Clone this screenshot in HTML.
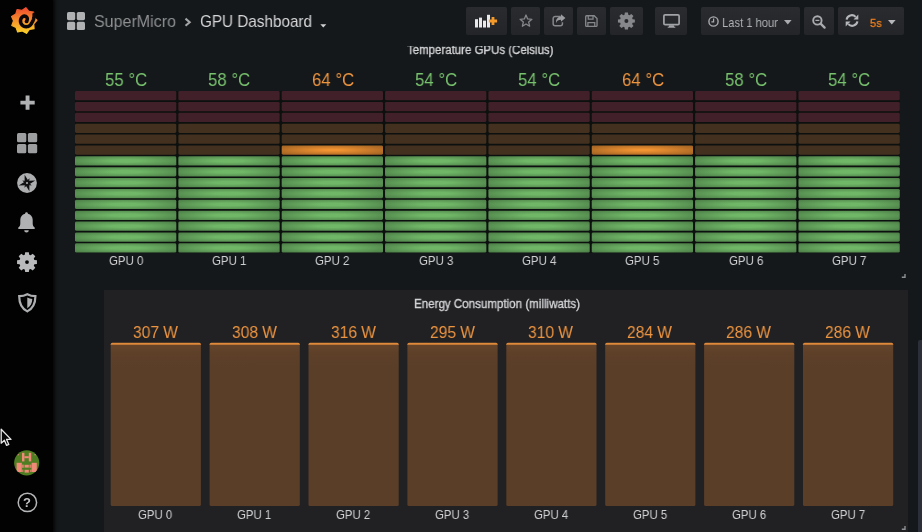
<!DOCTYPE html>
<html lang="en"><head><meta charset="utf-8"><title>GPU Dashboard - Grafana</title>
<style>
html,body{margin:0;padding:0}
body{width:922px;height:532px;overflow:hidden;position:relative;background:#15181a;
 font-family:"Liberation Sans",sans-serif;color:#d8d9da}
.abs{position:absolute}
.t{position:absolute;white-space:nowrap;transform-origin:0 50%;display:block;will-change:transform}
#side{left:0;top:0;width:52.5px;height:532px;background:#020203;box-shadow:1px 0 3px 1px rgba(2,2,3,.75);z-index:8}
#nav{left:53px;top:0;width:869px;height:46px;background:#15181a;z-index:5}
#p1{left:62px;top:0;width:845.8px;height:284.4px;overflow:hidden;background:#15181a}
#p2{left:103.5px;top:290px;width:804px;height:250px;background:#212124}
.btn{position:absolute;top:6.5px;height:28.5px;background:linear-gradient(#292b2e,#232528);border-radius:2px;z-index:6}
svg{position:absolute;overflow:visible}
</style></head><body>

<div class="abs" id="p1"></div>
<span class="t" style="left:407.00px;top:41.67px;font-size:12.5px;line-height:16px;color:#d3d4d6;transform:scaleX(0.9169);-webkit-text-stroke:.35px #d3d4d6;">Temperature GPUs (Celsius)</span>
<span class="t" style="left:104.80px;top:67.89px;font-size:18.5px;line-height:24px;color:#77c16e;transform:scaleX(0.9101);">55 °C</span>
<span class="t" style="left:108.55px;top:252.40px;font-size:13px;line-height:17px;color:#cfd0d2;transform:scaleX(0.8818);">GPU 0</span>
<span class="t" style="left:208.15px;top:67.89px;font-size:18.5px;line-height:24px;color:#77c16e;transform:scaleX(0.9101);">58 °C</span>
<span class="t" style="left:211.90px;top:252.40px;font-size:13px;line-height:17px;color:#cfd0d2;transform:scaleX(0.8818);">GPU 1</span>
<span class="t" style="left:311.50px;top:67.89px;font-size:18.5px;line-height:24px;color:#ee9540;transform:scaleX(0.9101);">64 °C</span>
<span class="t" style="left:315.25px;top:252.40px;font-size:13px;line-height:17px;color:#cfd0d2;transform:scaleX(0.8818);">GPU 2</span>
<span class="t" style="left:414.85px;top:67.89px;font-size:18.5px;line-height:24px;color:#77c16e;transform:scaleX(0.9101);">54 °C</span>
<span class="t" style="left:418.60px;top:252.40px;font-size:13px;line-height:17px;color:#cfd0d2;transform:scaleX(0.8818);">GPU 3</span>
<span class="t" style="left:518.20px;top:67.89px;font-size:18.5px;line-height:24px;color:#77c16e;transform:scaleX(0.9101);">54 °C</span>
<span class="t" style="left:521.95px;top:252.40px;font-size:13px;line-height:17px;color:#cfd0d2;transform:scaleX(0.8818);">GPU 4</span>
<span class="t" style="left:621.55px;top:67.89px;font-size:18.5px;line-height:24px;color:#ee9540;transform:scaleX(0.9101);">64 °C</span>
<span class="t" style="left:625.30px;top:252.40px;font-size:13px;line-height:17px;color:#cfd0d2;transform:scaleX(0.8818);">GPU 5</span>
<span class="t" style="left:724.90px;top:67.89px;font-size:18.5px;line-height:24px;color:#77c16e;transform:scaleX(0.9101);">58 °C</span>
<span class="t" style="left:728.65px;top:252.40px;font-size:13px;line-height:17px;color:#cfd0d2;transform:scaleX(0.8818);">GPU 6</span>
<span class="t" style="left:828.25px;top:67.89px;font-size:18.5px;line-height:24px;color:#77c16e;transform:scaleX(0.9101);">54 °C</span>
<span class="t" style="left:832.00px;top:252.40px;font-size:13px;line-height:17px;color:#cfd0d2;transform:scaleX(0.8818);">GPU 7</span>
<svg style="left:0;top:0" width="922" height="290" viewBox="0 0 922 290"><defs><radialGradient id="gg" cx="50%" cy="50%" r="70.7%"><stop offset="0.2" stop-color="#75c06c" stop-opacity=".95"/><stop offset="1" stop-color="#71bc68" stop-opacity=".62"/></radialGradient><radialGradient id="go" cx="50%" cy="50%" r="70.7%"><stop offset="0.1" stop-color="#ff9b34" stop-opacity=".95"/><stop offset="1" stop-color="#fa9430" stop-opacity=".6"/></radialGradient></defs><rect x="75.2" y="91.4" width="824.4" height="161.2" fill="#0c100e"/><rect x="75.00" y="91.10" width="101.3" height="9.2" rx="1.4" fill="#42202a"/><rect x="75.00" y="101.97" width="101.3" height="9.2" rx="1.4" fill="#42202a"/><rect x="75.00" y="112.85" width="101.3" height="9.2" rx="1.4" fill="#42202a"/><rect x="75.00" y="123.72" width="101.3" height="9.2" rx="1.4" fill="#44301f"/><rect x="75.00" y="134.60" width="101.3" height="9.2" rx="1.4" fill="#44301f"/><rect x="75.00" y="145.47" width="101.3" height="9.2" rx="1.4" fill="#44301f"/><rect x="75.00" y="156.35" width="101.3" height="9.2" rx="1.4" fill="url(#gg)"/><rect x="75.00" y="167.22" width="101.3" height="9.2" rx="1.4" fill="url(#gg)"/><rect x="75.00" y="178.10" width="101.3" height="9.2" rx="1.4" fill="url(#gg)"/><rect x="75.00" y="188.97" width="101.3" height="9.2" rx="1.4" fill="url(#gg)"/><rect x="75.00" y="199.85" width="101.3" height="9.2" rx="1.4" fill="url(#gg)"/><rect x="75.00" y="210.72" width="101.3" height="9.2" rx="1.4" fill="url(#gg)"/><rect x="75.00" y="221.60" width="101.3" height="9.2" rx="1.4" fill="url(#gg)"/><rect x="75.00" y="232.47" width="101.3" height="9.2" rx="1.4" fill="url(#gg)"/><rect x="75.00" y="243.35" width="101.3" height="9.2" rx="1.4" fill="url(#gg)"/><rect x="178.35" y="91.10" width="101.3" height="9.2" rx="1.4" fill="#42202a"/><rect x="178.35" y="101.97" width="101.3" height="9.2" rx="1.4" fill="#42202a"/><rect x="178.35" y="112.85" width="101.3" height="9.2" rx="1.4" fill="#42202a"/><rect x="178.35" y="123.72" width="101.3" height="9.2" rx="1.4" fill="#44301f"/><rect x="178.35" y="134.60" width="101.3" height="9.2" rx="1.4" fill="#44301f"/><rect x="178.35" y="145.47" width="101.3" height="9.2" rx="1.4" fill="#44301f"/><rect x="178.35" y="156.35" width="101.3" height="9.2" rx="1.4" fill="url(#gg)"/><rect x="178.35" y="167.22" width="101.3" height="9.2" rx="1.4" fill="url(#gg)"/><rect x="178.35" y="178.10" width="101.3" height="9.2" rx="1.4" fill="url(#gg)"/><rect x="178.35" y="188.97" width="101.3" height="9.2" rx="1.4" fill="url(#gg)"/><rect x="178.35" y="199.85" width="101.3" height="9.2" rx="1.4" fill="url(#gg)"/><rect x="178.35" y="210.72" width="101.3" height="9.2" rx="1.4" fill="url(#gg)"/><rect x="178.35" y="221.60" width="101.3" height="9.2" rx="1.4" fill="url(#gg)"/><rect x="178.35" y="232.47" width="101.3" height="9.2" rx="1.4" fill="url(#gg)"/><rect x="178.35" y="243.35" width="101.3" height="9.2" rx="1.4" fill="url(#gg)"/><rect x="281.70" y="91.10" width="101.3" height="9.2" rx="1.4" fill="#42202a"/><rect x="281.70" y="101.97" width="101.3" height="9.2" rx="1.4" fill="#42202a"/><rect x="281.70" y="112.85" width="101.3" height="9.2" rx="1.4" fill="#42202a"/><rect x="281.70" y="123.72" width="101.3" height="9.2" rx="1.4" fill="#44301f"/><rect x="281.70" y="134.60" width="101.3" height="9.2" rx="1.4" fill="#44301f"/><rect x="281.70" y="145.47" width="101.3" height="9.2" rx="1.4" fill="url(#go)"/><rect x="281.70" y="156.35" width="101.3" height="9.2" rx="1.4" fill="url(#gg)"/><rect x="281.70" y="167.22" width="101.3" height="9.2" rx="1.4" fill="url(#gg)"/><rect x="281.70" y="178.10" width="101.3" height="9.2" rx="1.4" fill="url(#gg)"/><rect x="281.70" y="188.97" width="101.3" height="9.2" rx="1.4" fill="url(#gg)"/><rect x="281.70" y="199.85" width="101.3" height="9.2" rx="1.4" fill="url(#gg)"/><rect x="281.70" y="210.72" width="101.3" height="9.2" rx="1.4" fill="url(#gg)"/><rect x="281.70" y="221.60" width="101.3" height="9.2" rx="1.4" fill="url(#gg)"/><rect x="281.70" y="232.47" width="101.3" height="9.2" rx="1.4" fill="url(#gg)"/><rect x="281.70" y="243.35" width="101.3" height="9.2" rx="1.4" fill="url(#gg)"/><rect x="385.05" y="91.10" width="101.3" height="9.2" rx="1.4" fill="#42202a"/><rect x="385.05" y="101.97" width="101.3" height="9.2" rx="1.4" fill="#42202a"/><rect x="385.05" y="112.85" width="101.3" height="9.2" rx="1.4" fill="#42202a"/><rect x="385.05" y="123.72" width="101.3" height="9.2" rx="1.4" fill="#44301f"/><rect x="385.05" y="134.60" width="101.3" height="9.2" rx="1.4" fill="#44301f"/><rect x="385.05" y="145.47" width="101.3" height="9.2" rx="1.4" fill="#44301f"/><rect x="385.05" y="156.35" width="101.3" height="9.2" rx="1.4" fill="url(#gg)"/><rect x="385.05" y="167.22" width="101.3" height="9.2" rx="1.4" fill="url(#gg)"/><rect x="385.05" y="178.10" width="101.3" height="9.2" rx="1.4" fill="url(#gg)"/><rect x="385.05" y="188.97" width="101.3" height="9.2" rx="1.4" fill="url(#gg)"/><rect x="385.05" y="199.85" width="101.3" height="9.2" rx="1.4" fill="url(#gg)"/><rect x="385.05" y="210.72" width="101.3" height="9.2" rx="1.4" fill="url(#gg)"/><rect x="385.05" y="221.60" width="101.3" height="9.2" rx="1.4" fill="url(#gg)"/><rect x="385.05" y="232.47" width="101.3" height="9.2" rx="1.4" fill="url(#gg)"/><rect x="385.05" y="243.35" width="101.3" height="9.2" rx="1.4" fill="url(#gg)"/><rect x="488.40" y="91.10" width="101.3" height="9.2" rx="1.4" fill="#42202a"/><rect x="488.40" y="101.97" width="101.3" height="9.2" rx="1.4" fill="#42202a"/><rect x="488.40" y="112.85" width="101.3" height="9.2" rx="1.4" fill="#42202a"/><rect x="488.40" y="123.72" width="101.3" height="9.2" rx="1.4" fill="#44301f"/><rect x="488.40" y="134.60" width="101.3" height="9.2" rx="1.4" fill="#44301f"/><rect x="488.40" y="145.47" width="101.3" height="9.2" rx="1.4" fill="#44301f"/><rect x="488.40" y="156.35" width="101.3" height="9.2" rx="1.4" fill="url(#gg)"/><rect x="488.40" y="167.22" width="101.3" height="9.2" rx="1.4" fill="url(#gg)"/><rect x="488.40" y="178.10" width="101.3" height="9.2" rx="1.4" fill="url(#gg)"/><rect x="488.40" y="188.97" width="101.3" height="9.2" rx="1.4" fill="url(#gg)"/><rect x="488.40" y="199.85" width="101.3" height="9.2" rx="1.4" fill="url(#gg)"/><rect x="488.40" y="210.72" width="101.3" height="9.2" rx="1.4" fill="url(#gg)"/><rect x="488.40" y="221.60" width="101.3" height="9.2" rx="1.4" fill="url(#gg)"/><rect x="488.40" y="232.47" width="101.3" height="9.2" rx="1.4" fill="url(#gg)"/><rect x="488.40" y="243.35" width="101.3" height="9.2" rx="1.4" fill="url(#gg)"/><rect x="591.75" y="91.10" width="101.3" height="9.2" rx="1.4" fill="#42202a"/><rect x="591.75" y="101.97" width="101.3" height="9.2" rx="1.4" fill="#42202a"/><rect x="591.75" y="112.85" width="101.3" height="9.2" rx="1.4" fill="#42202a"/><rect x="591.75" y="123.72" width="101.3" height="9.2" rx="1.4" fill="#44301f"/><rect x="591.75" y="134.60" width="101.3" height="9.2" rx="1.4" fill="#44301f"/><rect x="591.75" y="145.47" width="101.3" height="9.2" rx="1.4" fill="url(#go)"/><rect x="591.75" y="156.35" width="101.3" height="9.2" rx="1.4" fill="url(#gg)"/><rect x="591.75" y="167.22" width="101.3" height="9.2" rx="1.4" fill="url(#gg)"/><rect x="591.75" y="178.10" width="101.3" height="9.2" rx="1.4" fill="url(#gg)"/><rect x="591.75" y="188.97" width="101.3" height="9.2" rx="1.4" fill="url(#gg)"/><rect x="591.75" y="199.85" width="101.3" height="9.2" rx="1.4" fill="url(#gg)"/><rect x="591.75" y="210.72" width="101.3" height="9.2" rx="1.4" fill="url(#gg)"/><rect x="591.75" y="221.60" width="101.3" height="9.2" rx="1.4" fill="url(#gg)"/><rect x="591.75" y="232.47" width="101.3" height="9.2" rx="1.4" fill="url(#gg)"/><rect x="591.75" y="243.35" width="101.3" height="9.2" rx="1.4" fill="url(#gg)"/><rect x="695.10" y="91.10" width="101.3" height="9.2" rx="1.4" fill="#42202a"/><rect x="695.10" y="101.97" width="101.3" height="9.2" rx="1.4" fill="#42202a"/><rect x="695.10" y="112.85" width="101.3" height="9.2" rx="1.4" fill="#42202a"/><rect x="695.10" y="123.72" width="101.3" height="9.2" rx="1.4" fill="#44301f"/><rect x="695.10" y="134.60" width="101.3" height="9.2" rx="1.4" fill="#44301f"/><rect x="695.10" y="145.47" width="101.3" height="9.2" rx="1.4" fill="#44301f"/><rect x="695.10" y="156.35" width="101.3" height="9.2" rx="1.4" fill="url(#gg)"/><rect x="695.10" y="167.22" width="101.3" height="9.2" rx="1.4" fill="url(#gg)"/><rect x="695.10" y="178.10" width="101.3" height="9.2" rx="1.4" fill="url(#gg)"/><rect x="695.10" y="188.97" width="101.3" height="9.2" rx="1.4" fill="url(#gg)"/><rect x="695.10" y="199.85" width="101.3" height="9.2" rx="1.4" fill="url(#gg)"/><rect x="695.10" y="210.72" width="101.3" height="9.2" rx="1.4" fill="url(#gg)"/><rect x="695.10" y="221.60" width="101.3" height="9.2" rx="1.4" fill="url(#gg)"/><rect x="695.10" y="232.47" width="101.3" height="9.2" rx="1.4" fill="url(#gg)"/><rect x="695.10" y="243.35" width="101.3" height="9.2" rx="1.4" fill="url(#gg)"/><rect x="798.45" y="91.10" width="101.3" height="9.2" rx="1.4" fill="#42202a"/><rect x="798.45" y="101.97" width="101.3" height="9.2" rx="1.4" fill="#42202a"/><rect x="798.45" y="112.85" width="101.3" height="9.2" rx="1.4" fill="#42202a"/><rect x="798.45" y="123.72" width="101.3" height="9.2" rx="1.4" fill="#44301f"/><rect x="798.45" y="134.60" width="101.3" height="9.2" rx="1.4" fill="#44301f"/><rect x="798.45" y="145.47" width="101.3" height="9.2" rx="1.4" fill="#44301f"/><rect x="798.45" y="156.35" width="101.3" height="9.2" rx="1.4" fill="url(#gg)"/><rect x="798.45" y="167.22" width="101.3" height="9.2" rx="1.4" fill="url(#gg)"/><rect x="798.45" y="178.10" width="101.3" height="9.2" rx="1.4" fill="url(#gg)"/><rect x="798.45" y="188.97" width="101.3" height="9.2" rx="1.4" fill="url(#gg)"/><rect x="798.45" y="199.85" width="101.3" height="9.2" rx="1.4" fill="url(#gg)"/><rect x="798.45" y="210.72" width="101.3" height="9.2" rx="1.4" fill="url(#gg)"/><rect x="798.45" y="221.60" width="101.3" height="9.2" rx="1.4" fill="url(#gg)"/><rect x="798.45" y="232.47" width="101.3" height="9.2" rx="1.4" fill="url(#gg)"/><rect x="798.45" y="243.35" width="101.3" height="9.2" rx="1.4" fill="url(#gg)"/></svg>
<svg style="left:901.4px;top:273px" width="6" height="6" viewBox="0 0 6 6"><path d="M4 1V4.2H0.8" fill="none" stroke="#8d8f92" stroke-width="1.4"/></svg>
<div class="abs" id="p2"></div>
<span class="t" style="left:414.00px;top:296.37px;font-size:12.5px;line-height:16px;color:#d3d4d6;transform:scaleX(0.9262);-webkit-text-stroke:.35px #d3d4d6;">Energy Consumption (milliwatts)</span>
<span class="t" style="left:132.80px;top:321.51px;font-size:17px;line-height:22px;color:#ee9540;transform:scaleX(0.9159);">307 W</span>
<span class="t" style="left:138.40px;top:506.20px;font-size:13px;line-height:17px;color:#cfd0d2;transform:scaleX(0.8766);">GPU 0</span>
<span class="t" style="left:231.70px;top:321.51px;font-size:17px;line-height:22px;color:#ee9540;transform:scaleX(0.9159);">308 W</span>
<span class="t" style="left:237.30px;top:506.20px;font-size:13px;line-height:17px;color:#cfd0d2;transform:scaleX(0.8766);">GPU 1</span>
<span class="t" style="left:330.60px;top:321.51px;font-size:17px;line-height:22px;color:#ee9540;transform:scaleX(0.9159);">316 W</span>
<span class="t" style="left:336.20px;top:506.20px;font-size:13px;line-height:17px;color:#cfd0d2;transform:scaleX(0.8766);">GPU 2</span>
<span class="t" style="left:429.50px;top:321.51px;font-size:17px;line-height:22px;color:#ee9540;transform:scaleX(0.9159);">295 W</span>
<span class="t" style="left:435.10px;top:506.20px;font-size:13px;line-height:17px;color:#cfd0d2;transform:scaleX(0.8766);">GPU 3</span>
<span class="t" style="left:528.40px;top:321.51px;font-size:17px;line-height:22px;color:#ee9540;transform:scaleX(0.9159);">310 W</span>
<span class="t" style="left:534.00px;top:506.20px;font-size:13px;line-height:17px;color:#cfd0d2;transform:scaleX(0.8766);">GPU 4</span>
<span class="t" style="left:627.30px;top:321.51px;font-size:17px;line-height:22px;color:#ee9540;transform:scaleX(0.9159);">284 W</span>
<span class="t" style="left:632.90px;top:506.20px;font-size:13px;line-height:17px;color:#cfd0d2;transform:scaleX(0.8766);">GPU 5</span>
<span class="t" style="left:726.20px;top:321.51px;font-size:17px;line-height:22px;color:#ee9540;transform:scaleX(0.9159);">286 W</span>
<span class="t" style="left:731.80px;top:506.20px;font-size:13px;line-height:17px;color:#cfd0d2;transform:scaleX(0.8766);">GPU 6</span>
<span class="t" style="left:825.10px;top:321.51px;font-size:17px;line-height:22px;color:#ee9540;transform:scaleX(0.9159);">286 W</span>
<span class="t" style="left:830.70px;top:506.20px;font-size:13px;line-height:17px;color:#cfd0d2;transform:scaleX(0.8766);">GPU 7</span>
<svg style="left:0;top:0" width="922" height="532" viewBox="0 0 922 532"><defs><linearGradient id="gb" gradientUnits="userSpaceOnUse" x1="0" y1="342.7" x2="0" y2="506.1"><stop offset="0" stop-color="#d98639"/><stop offset="0.006" stop-color="#e08b3b"/><stop offset="0.011" stop-color="#c07634"/><stop offset="0.017" stop-color="#654429"/><stop offset="0.06" stop-color="#5e4029"/><stop offset="0.15" stop-color="#5b3e28"/><stop offset="1" stop-color="#5a3e28"/></linearGradient></defs><rect x="110.70" y="342.7" width="90.2" height="163.4" rx="1.6" fill="url(#gb)"/><rect x="209.60" y="342.7" width="90.2" height="163.4" rx="1.6" fill="url(#gb)"/><rect x="308.50" y="342.7" width="90.2" height="163.4" rx="1.6" fill="url(#gb)"/><rect x="407.40" y="342.7" width="90.2" height="163.4" rx="1.6" fill="url(#gb)"/><rect x="506.30" y="342.7" width="90.2" height="163.4" rx="1.6" fill="url(#gb)"/><rect x="605.20" y="342.7" width="90.2" height="163.4" rx="1.6" fill="url(#gb)"/><rect x="704.10" y="342.7" width="90.2" height="163.4" rx="1.6" fill="url(#gb)"/><rect x="803.00" y="342.7" width="90.2" height="163.4" rx="1.6" fill="url(#gb)"/></svg>
<svg style="left:901.4px;top:525px" width="6" height="6" viewBox="0 0 6 6"><path d="M4 1V4.2H0.8" fill="none" stroke="#8d8f92" stroke-width="1.4"/></svg>
<div class="abs" style="left:917.5px;top:340px;width:5px;height:200px;background:#2c2f38;border-radius:2px 0 0 0"></div>
<div class="abs" id="nav"></div>
<svg style="left:67px;top:12px;z-index:6" width="18" height="18" viewBox="0 0 18 18"><g fill="#afb1b3"><rect x="0" y="0" width="8.2" height="8.2" rx="1.6"/><rect x="9.8" y="0" width="8.2" height="8.2" rx="1.6"/><rect x="0" y="9.8" width="8.2" height="8.2" rx="1.6"/><rect x="9.8" y="9.8" width="8.2" height="8.2" rx="1.6"/></g></svg>
<span class="t" style="left:94.00px;top:11.01px;font-size:17px;line-height:22px;color:#8e9092;transform:scaleX(0.9434);z-index:6;">SuperMicro</span>
<svg style="left:184px;top:17.4px;z-index:6" width="8" height="11" viewBox="0 0 8 11"><path d="M1.5 1.6L5.7 5.2L1.5 8.8" fill="none" stroke="#a3a5a7" stroke-width="2.1"/></svg>
<span class="t" style="left:200.20px;top:11.01px;font-size:17px;line-height:22px;color:#d5d6d8;transform:scaleX(0.8979);z-index:6;">GPU Dashboard</span>
<svg style="left:319.5px;top:23.5px;z-index:6" width="7" height="4" viewBox="0 0 7 4"><path d="M0.3 0.2H6.3L3.3 3.6Z" fill="#d0d1d3"/></svg>
<div class="btn" style="left:465.5px;width:41.1px"></div>
<div class="btn" style="left:510.8px;width:29.4px"></div>
<div class="btn" style="left:544.3px;width:29.1px"></div>
<div class="btn" style="left:577.2px;width:28.9px"></div>
<div class="btn" style="left:610.1px;width:32.8px"></div>
<div class="btn" style="left:654.9px;width:32.3px"></div>
<div class="btn" style="left:701.2px;width:98.9px"></div>
<div class="btn" style="left:804.3px;width:29.3px"></div>
<div class="btn" style="left:837.5px;width:66.0px"></div>
<svg style="left:475px;top:14px;z-index:7" width="24" height="15" viewBox="0 0 24 15"><g fill="#e9e9ea"><rect x="0" y="5.2" width="3" height="8.3"/><rect x="4" y="3.6" width="3" height="9.9"/><rect x="8" y="6.6" width="3" height="6.9"/><rect x="12" y="0.8" width="3" height="12.7"/></g><path d="M16.6 2.9h2.8v2.7h2.7v2.8h-2.7v2.7h-2.8v-2.7h-2.7v-2.8h2.7z" fill="#f39a2b"/></svg>
<svg style="left:518.5px;top:14.2px;z-index:7" width="14" height="14" viewBox="0 0 14 14"><path d="M7.00 1.00 L8.65 4.93 L12.90 5.28 L9.66 8.07 L10.64 12.22 L7.00 10.00 L3.36 12.22 L4.34 8.07 L1.10 5.28 L5.35 4.93Z" fill="none" stroke="#85878a" stroke-width="1.3" stroke-linejoin="round"/></svg>
<svg style="left:551.6px;top:14.3px;z-index:7" width="14" height="13" viewBox="0 0 15 14"><path d="M9.3 2.6H3.4A2.2 2.2 0 0 0 1.2 4.8V10.4A2.2 2.2 0 0 0 3.4 12.6H9A2.2 2.2 0 0 0 11.2 10.4V8.8" fill="none" stroke="#85878a" stroke-width="1.6"/><path d="M9.6 0.4L14.4 4.4L9.6 8.4V6.1C6.8 6.1 5.2 7.2 4.3 9.6C4.1 5.6 6.2 2.9 9.6 2.7Z" fill="#9b9da0"/></svg>
<svg style="left:584.9px;top:15.4px;z-index:7" width="13.4" height="12.4" viewBox="0 0 14 13"><path d="M1.6 0.8H9.6L12.6 3.8V11A1 1 0 0 1 11.6 12H1.6A1 1 0 0 1 0.7 11V1.8A1 1 0 0 1 1.6 0.8Z" fill="none" stroke="#85878a" stroke-width="1.4"/><path d="M3.4 1V4.4H8.4V1M3 12V8H10.2V12" fill="none" stroke="#85878a" stroke-width="1.3"/></svg>
<svg style="left:617.5px;top:12.2px;z-index:7" width="17" height="18" viewBox="0 0 17 18"><path fill-rule="evenodd" fill="#85878a" d="M6.53 2.78 L6.84 0.54 L9.96 0.54 L10.27 2.78 L11.48 3.27 L13.28 1.92 L15.48 4.12 L14.13 5.92 L14.62 7.13 L16.86 7.44 L16.86 10.56 L14.62 10.87 L14.13 12.08 L15.48 13.88 L13.28 16.08 L11.48 14.73 L10.27 15.22 L9.96 17.46 L6.84 17.46 L6.53 15.22 L5.32 14.73 L3.52 16.08 L1.32 13.88 L2.67 12.08 L2.18 10.87 L-0.06 10.56 L-0.06 7.44 L2.18 7.13 L2.67 5.92 L1.32 4.12 L3.52 1.92 L5.32 3.27Z M6.40 9.00a2.0 2.0 0 1 0 4.0 0a2.0 2.0 0 1 0 -4.0 0Z"/></svg>
<svg style="left:662.5px;top:13.8px;z-index:7" width="17" height="14" viewBox="0 0 17 14"><rect x="0.9" y="0.9" width="15.2" height="9.8" rx="1.2" fill="none" stroke="#a1a3a6" stroke-width="1.7"/><path d="M6.2 11.2h4.6l0.5 1.6h1v1H4.7v-1h1z" fill="#a1a3a6"/></svg>
<svg style="left:707.8px;top:16.2px;z-index:7" width="11" height="11" viewBox="0 0 11 11"><circle cx="5.5" cy="5.5" r="4.6" fill="none" stroke="#a9abae" stroke-width="1.4"/><path d="M5.6 2.6V5.8H3.4" fill="none" stroke="#a9abae" stroke-width="1.2"/></svg>
<span class="t" style="left:722.40px;top:14.10px;font-size:13px;line-height:17px;color:#b1b3b6;transform:scaleX(0.8594);z-index:7;">Last 1 hour</span>
<svg style="left:784.2px;top:19.6px;z-index:7" width="8" height="5" viewBox="0 0 8 5"><path d="M0 0H7.6L3.8 4.5Z" fill="#a9abae"/></svg>
<svg style="left:812.2px;top:15.2px;z-index:7" width="14" height="14" viewBox="0 0 14 14"><circle cx="5.4" cy="5.4" r="4.2" fill="none" stroke="#a9abae" stroke-width="1.9"/><path d="M8.6 8.6L12.6 12.6" stroke="#a9abae" stroke-width="2.3" stroke-linecap="round"/><path d="M3.4 5.4H7.4" stroke="#a9abae" stroke-width="1.3"/></svg>
<svg style="left:844.6px;top:14.4px;z-index:7" width="14" height="13" viewBox="0 0 14 13"><path d="M1.6 5.6A5.2 5.2 0 0 1 10.6 2.9" fill="none" stroke="#b5b7ba" stroke-width="2.1"/><path d="M13.3 0.6V5.4H8.5Z" fill="#b5b7ba"/><path d="M12.4 7.4A5.2 5.2 0 0 1 3.4 10.1" fill="none" stroke="#b5b7ba" stroke-width="2.1"/><path d="M0.7 12.4V7.6H5.5Z" fill="#b5b7ba"/></svg>
<span class="t" style="left:870.30px;top:15.62px;font-size:11.5px;line-height:15px;color:#ee7d1c;transform:scaleX(0.9633);z-index:7;-webkit-text-stroke:.3px #ee7d1c;">5s</span>
<svg style="left:888px;top:19.6px;z-index:7" width="8" height="5" viewBox="0 0 8 5"><path d="M0 0H7.6L3.8 4.5Z" fill="#b5b7ba"/></svg>
<div class="abs" id="side"></div>
<svg style="left:11.3px;top:7px;z-index:9;" width="26" height="28" viewBox="0 0 26 28"><defs><linearGradient id="lg" x1="0" y1="0" x2="0" y2="1"><stop offset="0" stop-color="#ee4a2e"/><stop offset=".45" stop-color="#f58a2c"/><stop offset="1" stop-color="#fbd128"/></linearGradient></defs><path d="M14.84 0.75 L17.88 4.47 L22.65 5.00 L22.58 9.80 L25.90 13.28 L22.76 16.92 L23.06 21.71 L18.32 22.48 L15.47 26.34 L11.35 23.88 L6.68 25.01 L5.10 20.48 L0.80 18.34 L2.50 13.86 L0.58 9.45 L4.77 7.11 L6.13 2.50 L10.84 3.41Z" fill="url(#lg)" stroke="url(#lg)" stroke-width="1.2" stroke-linejoin="round"/><path d="M16.05 13.10 L16.20 12.76 L16.29 12.37 L16.32 11.94 L16.28 11.49 L16.15 11.02 L15.93 10.56 L15.63 10.13 L15.24 9.75 L14.79 9.44 L14.27 9.22 L13.72 9.09 L13.15 9.07 L12.58 9.16 L12.04 9.37 L11.56 9.69 L11.13 10.07 L10.75 10.50 L10.41 10.97 L10.11 11.47 L9.88 12.00 L9.69 12.55 L9.57 13.12 L9.51 13.70 L9.51 14.29 L9.57 14.88 L9.69 15.45 L9.87 16.01 L10.11 16.56 L10.40 17.07 L10.75 17.55 L11.15 17.99 L11.59 18.39 L12.07 18.75 L12.59 19.05 L13.14 19.29 L13.71 19.48 L14.30 19.61 L14.90 19.67 L15.50 19.67 L16.11 19.61 L16.70 19.49 L17.28 19.30 L17.84 19.05 L18.37 18.75 L18.87 18.39 L19.32 17.98 L19.74 17.52 L20.10 17.02 L20.42 16.49 L20.73 15.95 L21.06 15.39 L21.39 14.78 L21.73 14.13 L22.07 13.41 L22.39 12.61 L22.68 11.73 L22.92 10.74 L23.10 9.65 L23.18 8.45 L23.14 7.15" fill="none" stroke="#0b0607" stroke-width="3.5" stroke-linejoin="round" stroke-linecap="round"/><circle cx="15.6" cy="14.4" r="1.9" fill="#0b0607"/></svg>
<svg style="left:19.5px;top:95.2px;z-index:9;" width="15" height="15" viewBox="0 0 15 15"><path d="M5.6 0.4h3.9v5.3h5.2v3.8H9.5v5.2H5.6V9.5H0.4V5.7h5.2z" fill="#b0b1b3"/></svg>
<svg style="left:17px;top:133.3px;z-index:9;" width="20" height="20" viewBox="0 0 20 20"><g fill="#9d9ea0"><rect x="0" y="0" width="9.3" height="9.3" rx="1.5"/><rect x="10.9" y="0" width="9.3" height="9.3" rx="1.5"/><rect x="0" y="10.9" width="9.3" height="9.3" rx="1.5"/><rect x="10.9" y="10.9" width="9.3" height="9.3" rx="1.5"/></g></svg>
<svg style="left:17px;top:173.2px;z-index:9;" width="20" height="20" viewBox="0 0 20 20"><circle cx="10" cy="10" r="9.9" fill="#adaeb0"/><path d="M12.61 5.28 L11.92 9.45 L14.72 12.61 L10.55 11.92 L7.39 14.72 L8.08 10.55 L5.28 7.39 L9.45 8.08Z" fill="#1c1c1e"/><path d="M7.62 1.73 L11.31 7.64 L18.27 7.62 L12.36 11.31 L12.38 18.27 L8.69 12.36 L1.73 12.38 L7.64 8.69Z" fill="#101012"/><circle cx="10" cy="10" r="1" fill="#b4b5b7"/></svg>
<svg style="left:18.4px;top:212px;z-index:9;" width="17" height="21" viewBox="0 0 17 21"><path d="M8.5 0.3C9.4 0.3 9.9 0.9 9.9 1.7C12.9 2.4 14.7 4.8 14.7 7.8V11.4C14.7 13.2 15.4 14.6 16.7 15.6V17H0.3V15.6C1.6 14.6 2.3 13.2 2.3 11.4V7.8C2.3 4.8 4.1 2.4 7.1 1.7C7.1 0.9 7.6 0.3 8.5 0.3Z" fill="#b0b1b3"/><path d="M6.2 18.2H10.8A2.3 2.3 0 0 1 6.2 18.2Z" fill="#b0b1b3"/></svg>
<svg style="left:17px;top:252px;z-index:9;" width="20" height="20" viewBox="0 0 20 20"><path fill-rule="evenodd" fill="#b9babc" d="M7.78 2.73 L8.17 0.17 L11.83 0.17 L12.22 2.73 L13.65 3.32 L15.73 1.78 L18.32 4.37 L16.78 6.45 L17.37 7.88 L19.93 8.27 L19.93 11.93 L17.37 12.32 L16.78 13.75 L18.32 15.83 L15.73 18.42 L13.65 16.88 L12.22 17.47 L11.83 20.03 L8.17 20.03 L7.78 17.47 L6.35 16.88 L4.27 18.42 L1.68 15.83 L3.22 13.75 L2.63 12.32 L0.07 11.93 L0.07 8.27 L2.63 7.88 L3.22 6.45 L1.68 4.37 L4.27 1.78 L6.35 3.32Z M8.10 10.10a1.9 1.9 0 1 0 3.8 0a1.9 1.9 0 1 0 -3.8 0Z"/></svg>
<svg style="left:17.8px;top:292.5px;z-index:9;" width="19" height="20" viewBox="0 0 19 20"><path d="M9.3 1.2C11.8 2.6 14.6 3.2 17.4 3.2C17.4 10 15 15.4 9.3 18.4C3.6 15.4 1.2 10 1.2 3.2C4 3.2 6.8 2.6 9.3 1.2Z" fill="none" stroke="#adaeb0" stroke-width="2.2"/><path d="M9.3 4.6C10.9 5.4 12.6 5.8 14.3 5.9C14.1 10 12.6 13.2 9.3 15.2Z" fill="#b0b1b3"/></svg>
<svg style="left:0px;top:428px;z-index:9;" width="13" height="19" viewBox="0 0 13 19"><path d="M1.2 1.2V15.2L4.4 12.2L6.6 17.4L8.8 16.4L6.6 11.4H11Z" fill="#050506" stroke="#e6e6e6" stroke-width="1.3" stroke-linejoin="round"/></svg>
<svg style="left:14.4px;top:450px;z-index:9;" width="26" height="26" viewBox="0 0 26 26"><defs><clipPath id="av"><circle cx="12.7" cy="12.8" r="12.6"/></clipPath></defs><g clip-path="url(#av)"><rect width="26" height="26" fill="#4f7d22"/><g fill="#f08a78"><rect x="8" y="2.8" width="2.4" height="8.6"/><rect x="14.8" y="2.8" width="2.4" height="8.6"/><rect x="10.4" y="6.2" width="4.4" height="2"/><rect x="2.6" y="12.8" width="5.2" height="9.2"/><rect x="17.6" y="12.8" width="5.2" height="9.2"/><rect x="7.8" y="14.6" width="2" height="3.2" opacity=".8"/><rect x="15.4" y="14.6" width="2" height="3.2" opacity=".8"/><rect x="10.6" y="14.8" width="4.2" height="2.8"/><rect x="10.6" y="19.8" width="4.2" height="2.8"/><rect x="7.8" y="19.6" width="1.6" height="2.4" opacity=".7"/><rect x="16" y="19.6" width="1.6" height="2.4" opacity=".7"/><rect x="3.6" y="4" width="1.4" height="1.4" opacity=".7"/><rect x="20.4" y="4" width="1.4" height="1.4" opacity=".7"/></g></g></svg>
<svg style="left:16.6px;top:491.8px;z-index:9;" width="21" height="21" viewBox="0 0 21 21"><circle cx="10.4" cy="10.4" r="9.2" fill="none" stroke="#b5b6b8" stroke-width="1.5"/></svg>
<span class="t" style="left:23.13px;top:494.20px;font-size:13px;line-height:17px;color:#c2c3c5;transform:scaleX(1.0000);font-weight:bold;z-index:9;">?</span>
</body></html>
